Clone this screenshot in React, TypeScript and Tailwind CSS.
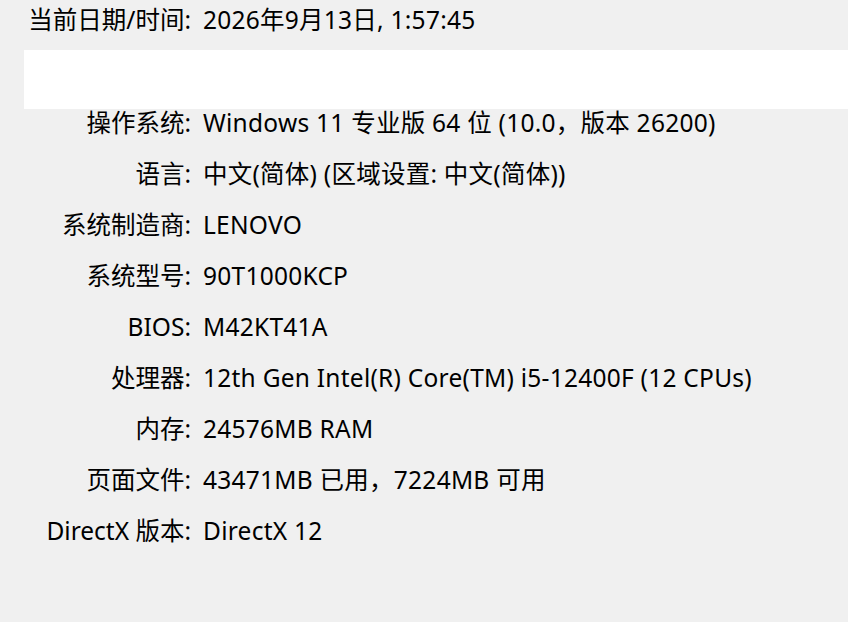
import React from "react";

const rows: [string, string][] = [
  ["操作系统:", "Windows 11 专业版 64 位 (10.0，版本 26200)"],
  ["语言:", "中文(简体) (区域设置: 中文(简体))"],
  ["系统制造商:", "LENOVO"],
  ["系统型号:", "90T1000KCP"],
  ["BIOS:", "M42KT41A"],
  ["处理器:", "12th Gen Intel(R) Core(TM) i5-12400F (12 CPUs)"],
  ["内存:", "24576MB RAM"],
  ["页面文件:", "43471MB 已用，7224MB 可用"],
  ["DirectX 版本:", "DirectX 12"],
];

export default function App() {
  return (
    <div
      className="w-[848px] h-[622px] bg-[#f0f0f0] text-[#000] text-[24.5px] leading-[28px] overflow-hidden"
      style={{ fontFamily: '"Noto Sans", "Noto Sans CJK SC", sans-serif' }}
    >
      <div className="flex h-[50px] pt-[6px]">
        <div className="w-[191px] text-right whitespace-nowrap">当前日期/时间:</div>
        <div className="ml-[12px] whitespace-nowrap tracking-[0.25px]">2026年9月13日, 1:57:45</div>
      </div>
      <div className="ml-[24px] h-[59px] bg-white" />
      {rows.map(([l, v]) => (
        <div key={l} className="flex h-[51px]">
          <div className="w-[191px] text-right whitespace-nowrap">{l}</div>
          <div className="ml-[12px] whitespace-nowrap tracking-[0.25px]">{v}</div>
        </div>
      ))}
    </div>
  );
}
